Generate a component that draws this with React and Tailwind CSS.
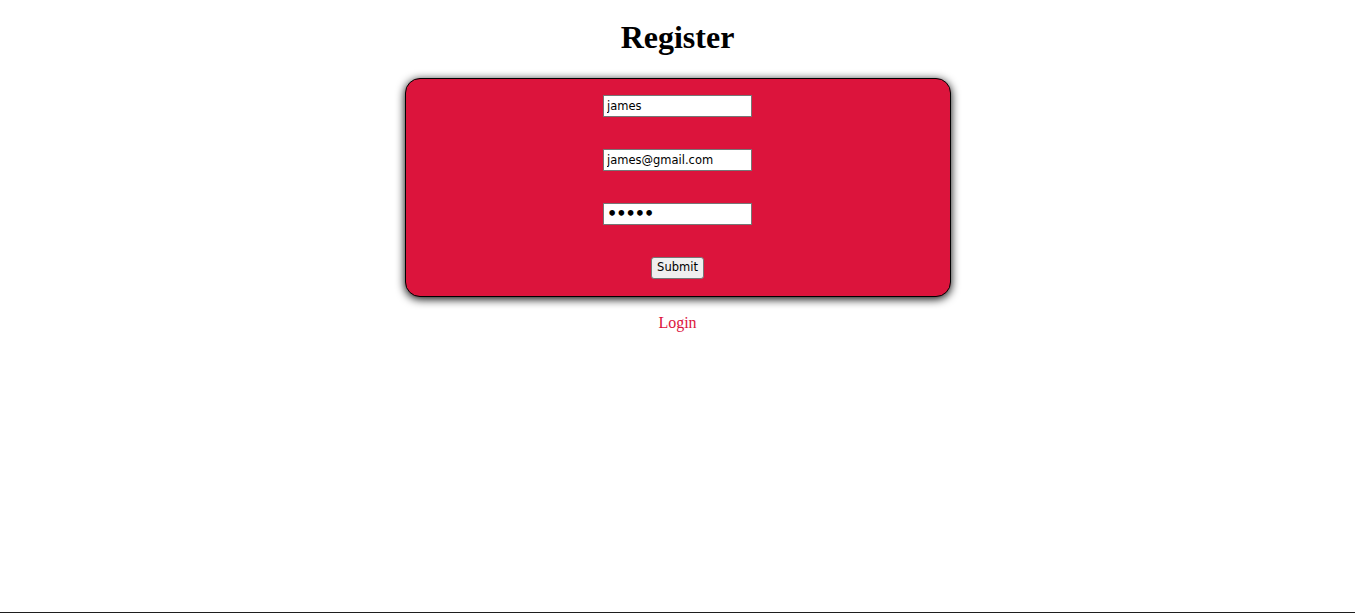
import React, { useState } from 'react';

const inputClass =
  "w-[149px] h-[22px] border border-[#767676] bg-white px-[3px] text-black outline-none font-['DejaVu_Sans',sans-serif]";

export default function App() {
  const [name, setName] = useState('james');
  const [email, setEmail] = useState('james@gmail.com');
  const [password, setPassword] = useState('12345');

  return (
    <div className="h-[613px] flex flex-col items-center bg-white font-['Liberation_Serif',serif]">
      <h1 className="pt-[13px] text-[32px] font-bold leading-normal text-black">Register</h1>

      {/* Form card */}
      <form
        className="mt-[17px] w-[546px] h-[219px] flex flex-col items-center gap-[32px] py-[16px] bg-[#dc143c] border border-black rounded-[15px] shadow-[0_2px_10px_rgba(0,0,0,1)]"
        onSubmit={(e) => e.preventDefault()}
      >
        <input className={`${inputClass} text-[11.5px]`} type="text" value={name} onChange={(e) => setName(e.target.value)} />
        <input className={`${inputClass} text-[11.5px]`} type="email" value={email} onChange={(e) => setEmail(e.target.value)} />
        <input className={`${inputClass} text-[16px] font-bold tracking-[-1px]`} type="password" value={password} onChange={(e) => setPassword(e.target.value)} />
        <button
          type="submit"
          className="h-[22px] px-[5px] border border-[#767676] rounded-[3px] bg-[#efefef] text-[11.5px] text-black font-['DejaVu_Sans',sans-serif]"
        >
          Submit
        </button>
      </form>

      <a href="#" className="mt-[14px] text-[16px] leading-normal text-[#dc143c]">Login</a>

      <div className="mt-auto w-full h-px bg-[#1e1e1e]" />
    </div>
  );
}
